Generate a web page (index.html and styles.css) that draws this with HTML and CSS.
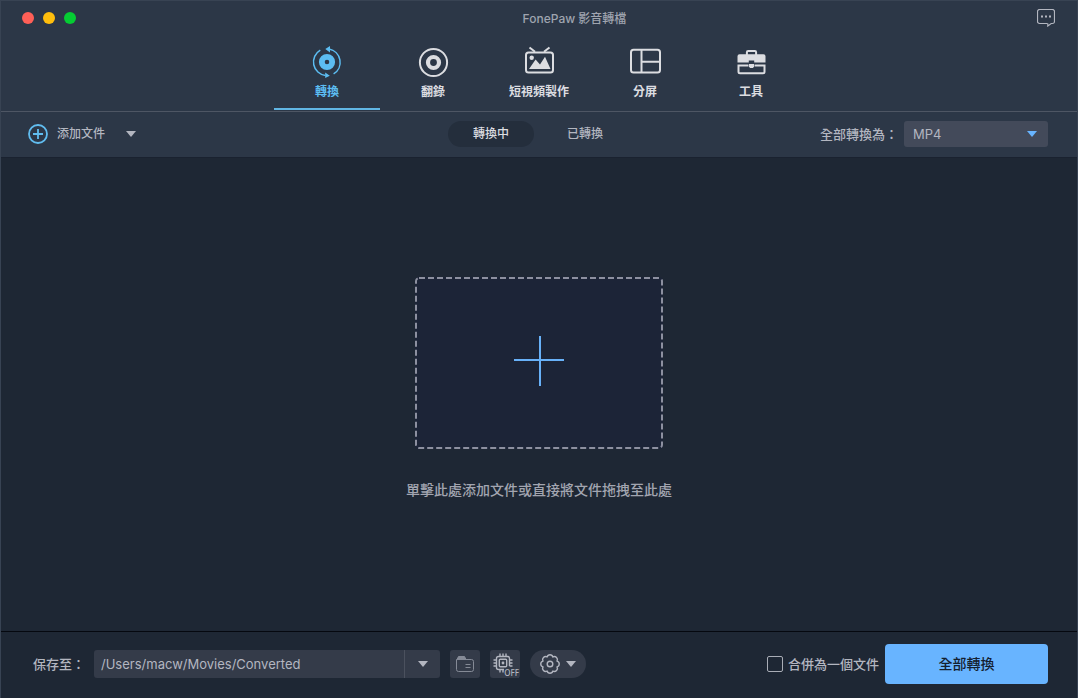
FILE: index.html
```html
<!DOCTYPE html>
<html lang="zh-Hant">
<head>
<meta charset="utf-8">
<meta name="viewport" content="width=device-width, initial-scale=1">
<title>FonePaw 影音轉檔</title>
<link rel="stylesheet" href="styles.css">
</head>
<body>
<div class="window">
  <header class="header">
    <div class="titlebar">
      <div class="lights">
        <button class="light light-close" aria-label="關閉"></button>
        <button class="light light-min" aria-label="最小化"></button>
        <button class="light light-max" aria-label="最大化"></button>
      </div>
      <h1 class="title">FonePaw 影音轉檔</h1>
      <button class="icon-button" aria-label="意見回饋">
        <svg width="18" height="18" viewBox="0 0 18 18" fill="none" stroke="currentColor" stroke-width="1.200">
          <path d="M10.5 14.5H2.6A2.1 2.1 0 0 1 .5 12.400V2.600A2.100 2.100 0 0 1 2.600.5H15.400A2.100 2.100 0 0 1 17.500 2.600V12.400A2.100 2.100 0 0 1 15.400 14.500H14.200L10.800 17V14.500"/>
          <path d="M4 7.500H6M8 7.500H10M12 7.500H14" stroke-width="2"/>
        </svg>
      </button>
    </div>
    <nav class="tabs">
      <button class="tab tab-active">
        <svg width="32" height="32" viewBox="0 0 32 32" fill="none" stroke="currentColor" stroke-width="1.500">
          <path d="M9.300 4.200A13.600 13.600 0 0 0 14.500 29.500M22.600 27.900A13.600 13.600 0 0 0 18 2.900"/>
          <path d="M14.300 3.100 19 0V6.400ZM18.800 29.700 14.200 26.500V32Z" fill="currentColor" stroke="none"/>
          <circle cx="16" cy="16" r="5.200" stroke-width="5.800"/>
        </svg>
        <span>轉換</span>
      </button>
      <button class="tab">
        <svg width="32" height="32" viewBox="0 0 32 32" fill="none" stroke="currentColor">
          <circle cx="16.500" cy="16.500" r="13.600" stroke-width="2"/>
          <circle cx="16.500" cy="16.500" r="5.500" stroke-width="4.200"/>
        </svg>
        <span>翻錄</span>
      </button>
      <button class="tab">
        <svg width="32" height="32" viewBox="0 0 32 32" fill="none" stroke="currentColor" stroke-width="2">
          <rect x="3" y="6.600" width="27" height="19.800" rx="2.500"/>
          <path d="M6.500 1.500 12 5.800M26.500 1.500 21 5.800"/>
          <circle cx="8.700" cy="11.800" r="2.200" fill="currentColor" stroke="none"/>
          <path d="M6 23 12.600 13.500 17 18.500 22 10.800 27.500 23Z" fill="currentColor" stroke="none"/>
        </svg>
        <span>短視頻製作</span>
      </button>
      <button class="tab">
        <svg width="34" height="32" viewBox="0 0 34 32" fill="none" stroke="currentColor" stroke-width="2">
          <rect x="3" y="3.800" width="29" height="22.700" rx="2.500"/>
          <path d="M13.500 4V26.500M13.500 15.800H31.500"/>
        </svg>
        <span>分屏</span>
      </button>
      <button class="tab">
        <svg width="32" height="32" viewBox="0 0 32 32" fill="none" stroke="currentColor" stroke-width="2">
          <path d="M11.900 9V6.200Q11.900 5 13.100 5H19.900Q21.100 5 21.100 6.200V9"/>
          <path d="M4.500 8.300H28.500Q30.500 8.300 30.500 10.300V16.600H19.200V14.500H13.800V16.600H2.500V10.300Q2.500 8.300 4.500 8.300Z" fill="currentColor" stroke="none"/>
          <path d="M3.500 18.500V25.700Q3.500 27.200 5 27.200H28Q29.500 27.200 29.500 25.700V18.500M2.500 19.500H13.500M19.500 19.500H30.500"/>
          <path d="M14 18H19V20.500L18 22H15L14 20.500Z" fill="currentColor" stroke="none"/>
        </svg>
        <span>工具</span>
      </button>
    </nav>
  </header>

  <div class="toolbar">
    <div class="add">
      <button class="add-button">
        <svg width="20" height="20" viewBox="0 0 20 20" fill="none" stroke="currentColor" stroke-width="1.800">
          <circle cx="10" cy="10" r="9"/>
          <path d="M10 5V15M5 10H15"/>
        </svg>
        <span>添加文件</span>
      </button>
      <button class="icon-button" aria-label="更多添加選項">
        <svg class="caret" width="10" height="6" viewBox="0 0 10 6"><path d="M0 0H10L5 6Z"/></svg>
      </button>
    </div>
    <div class="views">
      <button class="view view-active">轉換中</button>
      <button class="view">已轉換</button>
    </div>
    <div class="format">
      <label for="format">全部轉換為：</label>
      <div class="select-box">
        <select id="format" class="select"><option>MP4</option></select>
        <svg class="caret caret-blue" width="10" height="6" viewBox="0 0 10 6"><path d="M0 0H10L5 6Z"/></svg>
      </div>
    </div>
  </div>

  <main class="main">
    <button class="drop" aria-label="添加文件">
      <svg width="248" height="172" viewBox="0 0 248 172" fill="none">
        <rect class="drop-edge" x="1" y="1" width="246" height="170" rx="3"/>
        <path class="drop-plus" d="M125 59V109M99 83H149"/>
      </svg>
    </button>
    <p class="hint">單擊此處添加文件或直接將文件拖拽至此處</p>
  </main>

  <footer class="footer">
    <label class="save-label" for="path">保存至：</label>
    <div class="path-box">
      <input id="path" class="path" type="text" value="/Users/macw/Movies/Converted">
      <button class="path-more" aria-label="選擇位置">
        <svg class="caret" width="10" height="6" viewBox="0 0 10 6"><path d="M0 0H10L5 6Z"/></svg>
      </button>
    </div>
    <button class="tool" aria-label="打開文件夾">
      <svg class="folder" width="18" height="16" viewBox="0 0 18 16" fill="none" stroke="currentColor">
        <path d="M.5 3.500V13.500Q.5 15.500 2.500 15.500H15.500Q17.500 15.500 17.500 13.500V5.500Q17.500 3.500 15.500 3.500ZM9.500 8.500H14.500M9.500 11.500H14.500"/>
        <path d="M1 3.500 2.500.5H8.500L10 3.500Z" fill="currentColor"/>
      </svg>
    </button>
    <button class="tool" aria-label="硬件加速 OFF">
      <svg class="chip" width="20" height="20" viewBox="0 0 20 20" fill="none" stroke="currentColor" stroke-width="1.400">
        <path d="M11 16.500H5.500Q3.500 16.500 3.500 14.500V5.500Q3.500 3.500 5.500 3.500H14.500Q16.500 3.500 16.500 5.500V13"/>
        <rect x="6.300" y="6.300" width="7.400" height="7.400" rx="1"/>
        <circle cx="10" cy="10" r="1.400" fill="currentColor" stroke="none"/>
        <path d="M7 .5V3.500M10 .5V3.500M13 .5V3.500M7 16.500V19.500M10 16.500V19.500M.5 7H3.500M.5 10H3.500M.5 13H3.500M16.500 7H19.500M16.500 10H19.500M16.500 13H19.500"/>
      </svg>
      <span class="off">OFF</span>
    </button>
    <button class="settings" aria-label="設定">
      <svg width="20" height="20" viewBox="0 0 20 20" fill="none" stroke="currentColor" stroke-width="1.400" stroke-linejoin="round">
        <path d="M7.100 3A3 3 0 0 1 12.900 3A3 3 0 0 1 17 7.100A3 3 0 0 1 17 12.900A3 3 0 0 1 12.900 17A3 3 0 0 1 7.100 17A3 3 0 0 1 3 12.900A3 3 0 0 1 3 7.100A3 3 0 0 1 7.100 3Z"/>
        <circle cx="10" cy="10" r="2.800"/>
      </svg>
      <svg class="caret" width="10" height="6" viewBox="0 0 10 6"><path d="M0 0H10L5 6Z"/></svg>
    </button>
    <label class="merge"><input class="check" type="checkbox">合併為一個文件</label>
    <button class="convert">全部轉換</button>
  </footer>
</div>
</body>
</html>
```

FILE: styles.css
```css
* { box-sizing: border-box; }

body {
  margin: 0;
  background: #1e2734;
  color: #b3b6c0;
  font: 500 12px/18px Inter, "Noto Sans CJK TC", sans-serif;
}

button, input, select { font: inherit; color: inherit; }

button {
  padding: 0;
  border: 0;
  background: none;
  cursor: pointer;
}

svg { display: block; flex: none; }

.window {
  display: flex;
  flex-direction: column;
  min-height: 100vh;
  border: 1px solid #384353;
  border-bottom: 0;
}

.header {
  background: #2c3747;
  border-bottom: 1px solid #4e5664;
}

.titlebar {
  display: flex;
  align-items: center;
  height: 34px;
  padding: 0 22px 0 21px;
}

.lights { display: flex; gap: 9px; }
.light { width: 12px; height: 12px; border-radius: 50%; }
.light-close { background: #ff5f57; }
.light-min { background: #ffbe0d; }
.light-max { background: #05cc33; }

.title {
  flex: 1;
  margin: 0;
  padding: 1px 0 0 36px;
  font-size: 12px;
  font-weight: 500;
  text-align: center;
  color: #9fa4af;
}

.icon-button { display: flex; }

.tabs {
  display: flex;
  justify-content: center;
  padding-bottom: 1px;
}

.tab {
  display: flex;
  flex-direction: column;
  align-items: center;
  gap: 5px;
  width: 106px;
  height: 75px;
  padding-top: 11px;
  color: #dcdde1;
  font-weight: 700;
}

.tab-active {
  color: #5cbdf2;
  border-bottom: 2px solid #61b6e4;
}

.toolbar {
  display: grid;
  grid-template-columns: 1fr auto 1fr;
  align-items: center;
  height: 46px;
  padding: 0 29px 1px 27px;
  background: #2c3747;
  border-bottom: 1px solid #1a2230;
}

.add { display: flex; align-items: center; gap: 21px; }
.add-button { display: flex; align-items: center; gap: 9px; }
.add-button svg { color: #61bdf0; }
.caret { fill: #b3b6c0; }
.caret-blue { fill: #68b4ff; }

.views { display: flex; gap: 8px; }
.view { width: 86px; height: 26px; border-radius: 13px; }
.view-active { background: #242e3c; color: #dcdde1; }

.format {
  display: flex;
  align-items: center;
  justify-content: flex-end;
  gap: 6px;
  font-size: 13px;
}

.select-box { display: grid; align-items: center; width: 144px; }
.select-box > * { grid-area: 1 / 1; }
.select-box .caret { justify-self: end; margin-right: 11px; pointer-events: none; }

.select {
  appearance: none;
  width: 100%;
  height: 26px;
  padding: 0 9px;
  border: 0;
  border-radius: 3px;
  background: #434a5a;
  font-weight: 400;
}

.main {
  flex: 1;
  display: flex;
  flex-direction: column;
  align-items: center;
  justify-content: center;
  gap: 32px;
  padding-bottom: 14px;
}

.drop { background: #1c2437; border-radius: 4px; }
.drop-edge { stroke: #8d90a0; stroke-width: 2; stroke-dasharray: 6 3; }
.drop-plus { stroke: #68b1f8; stroke-width: 2; }
.hint { margin: 0; font-size: 14px; color: #a2a5b0; }

.footer {
  display: flex;
  align-items: center;
  gap: 9px;
  height: 67px;
  padding: 0 29px 2px 32px;
  border-top: 1px solid #05080f;
  font-size: 13px;
}

.save-label { white-space: nowrap; }

.path-box {
  display: flex;
  width: 346px;
  height: 28px;
  margin-right: 1px;
  border-radius: 3px;
  background: #343b49;
}

.path {
  flex: 1;
  min-width: 0;
  padding: 0 7px;
  border: 0;
  background: none;
  font-weight: 400;
}

.path-more {
  display: grid;
  place-items: center;
  width: 36px;
  border-left: 1px solid #4b515e;
}

.tool {
  position: relative;
  display: grid;
  place-items: center;
  width: 30px;
  height: 28px;
  margin-right: 1px;
  border-radius: 3px;
  background: #343b49;
}

.folder { color: #858a96; }
.chip { margin: 0 4px 2px 0; }

.off {
  position: absolute;
  right: 1px;
  bottom: 0;
  font: 500 8px/10px "Noto Sans", sans-serif;
  background: #343b49;
}

.settings {
  display: flex;
  align-items: center;
  justify-content: center;
  gap: 6px;
  width: 56px;
  height: 28px;
  border-radius: 14px;
  background: #343b49;
}

.merge {
  display: flex;
  align-items: center;
  gap: 5px;
  margin-left: auto;
  white-space: nowrap;
}

.check {
  appearance: none;
  width: 16px;
  height: 16px;
  margin: 0;
  border: 1px solid #a9adb6;
  border-radius: 2px;
}

.check:checked { background: #68b4ff; }

.convert {
  width: 163px;
  height: 40px;
  margin-left: -3px;
  border-radius: 4px;
  background: #68b4ff;
  color: #14202f;
  font-size: 14px;
}
```
